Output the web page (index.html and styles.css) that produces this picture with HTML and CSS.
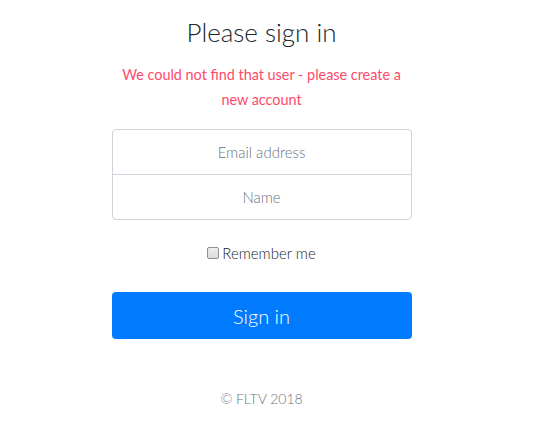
FILE: index.html
```html
<!DOCTYPE html>
<html>
<head>
<meta charset="utf-8">
<link rel="stylesheet" href="styles.css">
</head>
<body>
<form class="signin">
  <h1 class="title">Please sign in</h1>
  <p class="error">We could not find that user - please create a new account</p>
  <div class="fields">
    <input class="field field-top" type="email" placeholder="Email address">
    <input class="field field-bottom" type="text" placeholder="Name">
  </div>
  <label class="remember"><input type="checkbox" class="check"> Remember me</label>
  <button class="btn" type="button">Sign in</button>
  <p class="footer">© FLTV 2018</p>
</form>
</body>
</html>
```
FILE: styles.css
```css
html, body {
  margin: 0;
  padding: 0;
  background: #fff;
}
body {
  padding-right: 14px;
  font-family: Lato, "Open Sans", sans-serif;
  color: #212529;
}
.signin {
  width: 300px;
  margin: 0 auto;
  padding-top: 15px;
  display: flex;
  flex-direction: column;
  align-items: stretch;
  text-align: center;
}
.title {
  margin: 0;
  font-size: 26px;
  font-weight: 300;
  line-height: 34px;
  color: #212529;
}
.error {
  margin: 13px 0 0;
  font-size: 14.4px;
  line-height: 25px;
  color: #ff4a6b;
  font-weight: 400;
}
.fields {
  margin-top: 17px;
  display: flex;
  flex-direction: column;
}
.field {
  box-sizing: border-box;
  height: 46px;
  margin: 0;
  padding: 10px;
  border: 1px solid #ced4da;
  font-family: inherit;
  font-size: 15px;
  text-align: center;
  color: #495057;
  outline: none;
}
.field::placeholder {
  color: #6c757d;
  font-weight: 300;
}
.field-top {
  border-radius: 4px 4px 0 0;
}
.field-bottom {
  margin-top: -1px;
  border-radius: 0 0 4px 4px;
}
.remember {
  margin-top: 24px;
  display: flex;
  align-items: center;
  justify-content: center;
  gap: 3px;
  font-size: 15px;
  font-weight: 300;
  color: #212529;
}
.check {
  appearance: none;
  -webkit-appearance: none;
  box-sizing: border-box;
  margin: 0;
  width: 12px;
  height: 12px;
  border: 1px solid #8f8f8f;
  border-radius: 2px;
  background: linear-gradient(#ededed, #dcdcdc);
}
.btn {
  margin-top: 30px;
  height: 47px;
  border: 0;
  border-radius: 4px;
  background: #007bff;
  color: #fff;
  font-family: inherit;
  font-size: 20px;
  font-weight: 300;
}
.footer {
  margin: 49px 0 0;
  font-size: 14px;
  line-height: 21px;
  font-weight: 300;
  color: #6c757d;
}
```
